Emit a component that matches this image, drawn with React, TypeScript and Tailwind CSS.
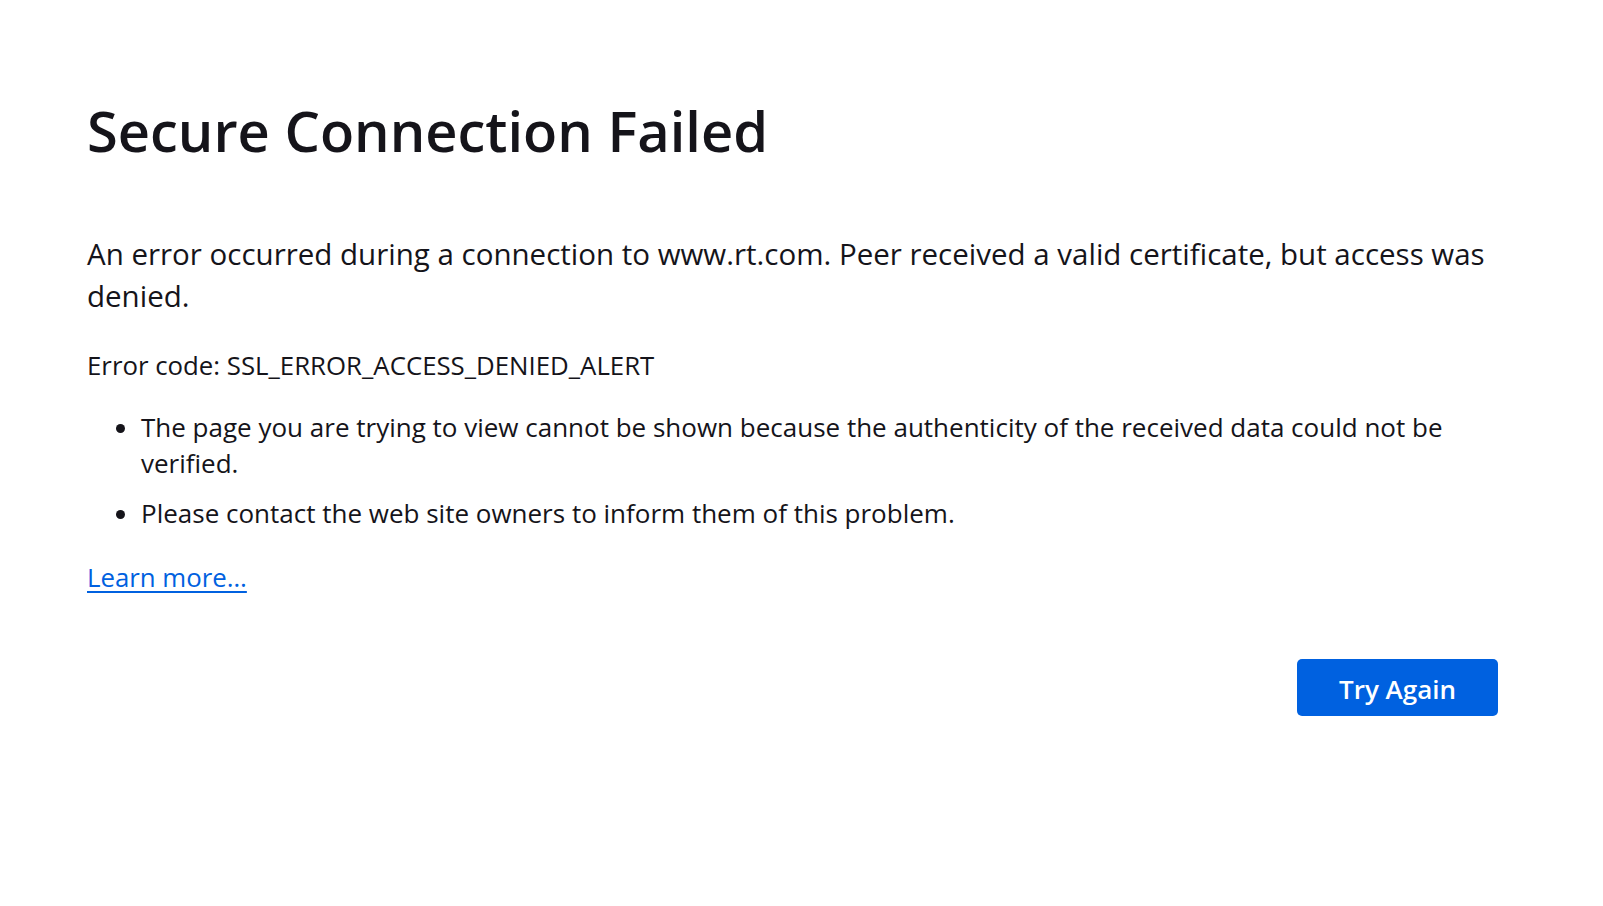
export default function App() {
  return (
    <div className="min-h-screen bg-white font-['Open_Sans',sans-serif] text-[#15141a]">
      <main className="ml-[87px] w-[1411px] pt-[97px]">
        <h1 className="text-[56px] leading-[67px] font-semibold">Secure Connection Failed</h1>

        <p className="mt-[69px] text-[29.5px] leading-[42px]">
          An error occurred during a connection to www.rt.com. Peer received a valid certificate, but
          access was denied.
        </p>

        <p className="mt-[30px] text-[25.8px] leading-[36px]">Error code: SSL_ERROR_ACCESS_DENIED_ALERT</p>

        <ul className="mt-[26px] list-disc pl-[54px] text-[26px] leading-[36px]">
          <li>
            The page you are trying to view cannot be shown because the authenticity of the received
            data could not be verified.
          </li>
          <li className="mt-[14px]">Please contact the web site owners to inform them of this problem.</li>
        </ul>

        <div className="mt-[28px] text-[25.8px] leading-[36px]">
          <a href="#" className="text-[#0061e0] underline underline-offset-[4px]">
            Learn more…
          </a>
        </div>

        <div className="mt-[64px] flex justify-end">
          <button className="h-[57px] w-[201px] rounded-[5px] bg-[#0061e0] pt-[3px] text-[26px] font-semibold text-white">
            Try Again
          </button>
        </div>
      </main>
    </div>
  );
}
